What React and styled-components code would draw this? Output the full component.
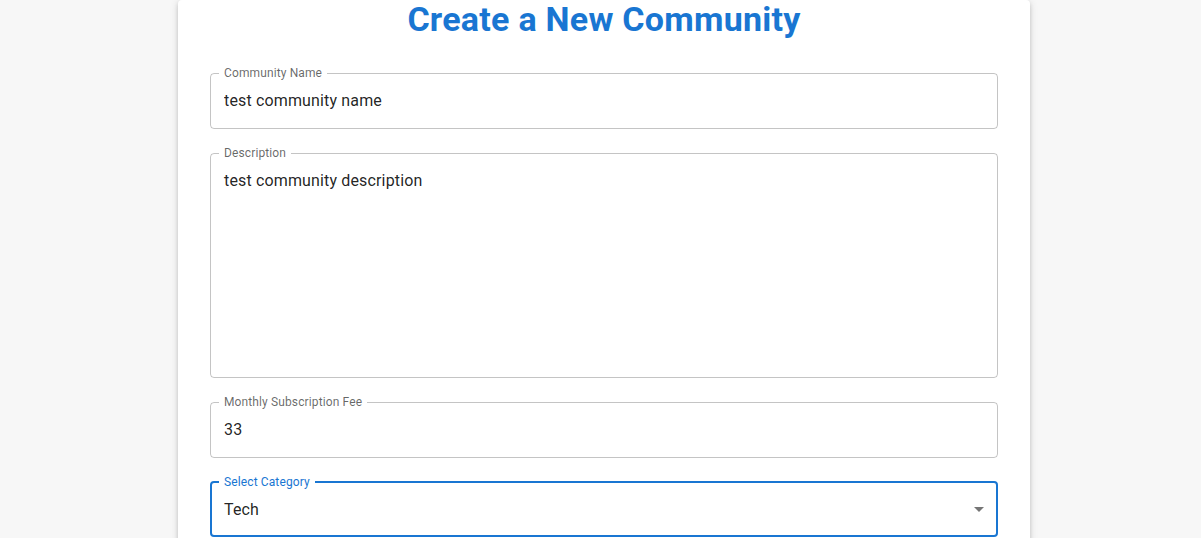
import React from 'react';
import styled, { createGlobalStyle } from 'styled-components';

const GlobalStyle = createGlobalStyle`
  body {
    margin: 0;
    background: #f7f7f7;
    font-family: Roboto, "Liberation Sans", sans-serif;
    overflow: hidden;
  }
`;

const blue = '#1976d2';

const Page = styled.div`
  display: flex;
  justify-content: center;
  padding-left: 7px;
`;

const Card = styled.div`
  width: 852px;
  box-sizing: border-box;
  padding: 0 32px 32px;
  background: #fff;
  border-radius: 4px;
  box-shadow: 0px 3px 3px -2px rgba(0, 0, 0, 0.2), 0px 3px 4px 0px rgba(0, 0, 0, 0.14),
    0px 1px 8px 0px rgba(0, 0, 0, 0.12);
`;

const Title = styled.h1`
  margin: 0 0 31px;
  padding-top: 2px;
  font-size: 34px;
  line-height: 34px;
  font-weight: 700;
  letter-spacing: 0.25px;
  color: ${blue};
  text-align: center;
`;

const Form = styled.form`
  display: flex;
  flex-direction: column;
  gap: 18px;
`;

const Field = styled.fieldset`
  margin: 0;
  padding: 0;
  min-width: 0;
  border: ${({ $focused }) => ($focused ? `2px solid ${blue}` : '1px solid rgba(0, 0, 0, 0.23)')};
  border-radius: 4px;
`;

const Label = styled.legend`
  margin-left: ${({ $focused }) => ($focused ? '7px' : '8px')};
  padding: 0 5px;
  font-size: 12px;
  line-height: 12px;
  letter-spacing: 0.12px;
  color: ${({ $focused }) => ($focused ? blue : 'rgba(0, 0, 0, 0.6)')};
`;

const inputBase = `
  display: block;
  box-sizing: content-box;
  border: 0;
  outline: none;
  background: transparent;
  margin: 0;
  font-family: Roboto, "Liberation Sans", sans-serif;
  font-size: 16px;
  line-height: 23px;
  letter-spacing: 0.15px;
  height: 23px;
  color: rgba(0, 0, 0, 0.87);
`;

const Input = styled.input`
  ${inputBase}
  width: calc(100% - 26px);
  padding: 10px 13px 16px;
`;

const TextArea = styled.textarea`
  ${inputBase}
  width: calc(100% - 26px);
  height: 192px;
  padding: 10px 13px 16px;
  resize: none;
  overflow: hidden;
`;

const SelectBox = styled.div`
  display: flex;
  align-items: center;
  height: 23px;
  padding: 10px 5px 14px 12px;
  font-size: 16px;
  line-height: 23px;
  letter-spacing: 0.15px;
  color: rgba(0, 0, 0, 0.87);
`;

const SelectValue = styled.span`
  flex: 1;
`;

const Arrow = styled.svg`
  width: 24px;
  height: 24px;
  margin-top: -1px;
  fill: rgba(0, 0, 0, 0.54);
  flex-shrink: 0;
`;

export default function App() {
  return (
    <>
      <GlobalStyle />
      <Page>
        <Card>
          <Title>Create a New Community</Title>
          <Form>
            <Field>
              <Label>Community Name</Label>
              <Input readOnly value="test community name" />
            </Field>
            <Field>
              <Label>Description</Label>
              <TextArea readOnly value="test community description" />
            </Field>
            <Field>
              <Label>Monthly Subscription Fee</Label>
              <Input readOnly value="33" />
            </Field>
            <Field $focused>
              <Label $focused>Select Category</Label>
              <SelectBox>
                <SelectValue>Tech</SelectValue>
                <Arrow viewBox="0 0 24 24">
                  <path d="M7 10l5 5 5-5z" />
                </Arrow>
              </SelectBox>
            </Field>
          </Form>
        </Card>
      </Page>
    </>
  );
}
